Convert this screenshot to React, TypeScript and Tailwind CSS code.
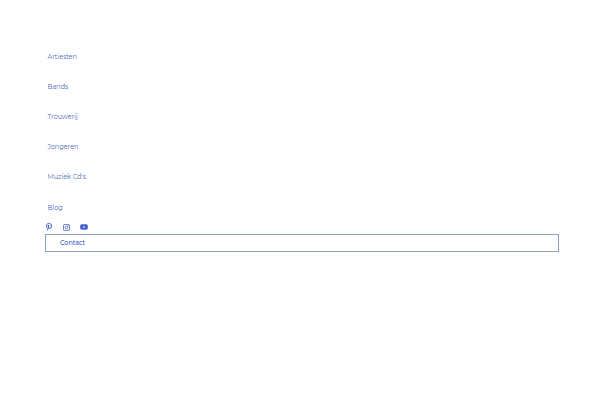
import { FaPinterestP, FaYoutube } from "react-icons/fa6";

const links = ["Artiesten", "Bands", "Trouwerij", "Jongeren", "Muziek Cd's", "Blog"];

function InstagramIcon() {
  return (
    <svg width="7" height="7" viewBox="0 0 14 14" fill="none" stroke="currentColor" strokeWidth="1.6">
      <rect x="0.8" y="0.8" width="12.4" height="12.4" rx="3" />
      <circle cx="7" cy="7" r="2.8" />
      <circle cx="10.6" cy="3.4" r="0.5" fill="currentColor" strokeWidth="0.6" />
    </svg>
  );
}

function App() {
  return (
    <div className="min-h-screen bg-white px-[45px] pt-[41.8px] font-['Montserrat','Inter',sans-serif] text-[#4f6bb4]">
      <nav className="flex flex-col pl-[2.5px]">
        {links.map((label) => (
          <a key={label} href="#" className="flex h-[30.2px] items-center text-[6.5px] leading-none">
            {label}
          </a>
        ))}
      </nav>
      <div className="flex h-[11px] items-start text-[#3f5fca]">
        <div className="flex h-[9px] items-center">
          <FaPinterestP size={8} />
          <div className="ml-[10px]">
            <InstagramIcon />
          </div>
          <FaYoutube size={8} className="ml-[10px]" />
        </div>
      </div>
      <a
        href="#"
        className="flex h-[18px] w-[514px] items-center border border-[#8fa2c9] pt-[0.4px] pl-[14px] text-[6.4px] leading-none font-medium tracking-[-0.05px] text-[#3c5cc0]"
      >
        Contact
      </a>
    </div>
  );
}

export default App;
